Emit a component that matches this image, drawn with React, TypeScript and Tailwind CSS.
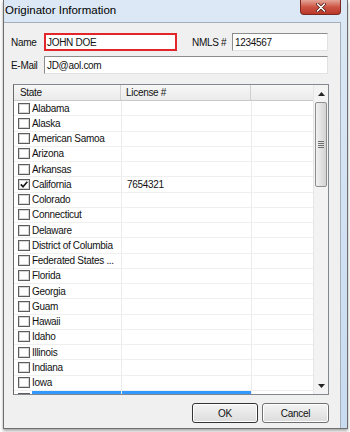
import React from 'react'

type StateRow = { name: string; license?: string; checked?: boolean }

const rows: StateRow[] = [
  { name: 'Alabama' },
  { name: 'Alaska' },
  { name: 'American Samoa' },
  { name: 'Arizona' },
  { name: 'Arkansas' },
  { name: 'California', license: '7654321', checked: true },
  { name: 'Colorado' },
  { name: 'Connecticut' },
  { name: 'Delaware' },
  { name: 'District of Columbia' },
  { name: 'Federated States ...' },
  { name: 'Florida' },
  { name: 'Georgia' },
  { name: 'Guam' },
  { name: 'Hawaii' },
  { name: 'Idaho' },
  { name: 'Illinois' },
  { name: 'Indiana' },
  { name: 'Iowa' },
]

const field =
  'flex h-[18px] items-center bg-white border border-[#e2e2e2] border-t-[#8c8c8c] border-l-[#8c8c8c] px-[2px] text-[#111]'

function CheckBox({ checked }: { checked?: boolean }) {
  return (
    <span className="flex h-[11px] w-[12px] shrink-0 items-center justify-center border border-[#5c5c5c] bg-white shadow-[inset_0_0_0_1px_#d6d6d6]">
      {checked && (
        <svg width="8" height="7" viewBox="0 0 8 7">
          <path d="M0.8 3.4 L3 5.7 L7.3 0.8" fill="none" stroke="#1a1a1a" strokeWidth="1.7" />
        </svg>
      )}
    </span>
  )
}

function Row({ row }: { row: StateRow }) {
  return (
    <div className="flex h-[15.25px] shrink-0 border-b border-[#efefef]">
      <div className="flex w-[108px] items-center border-r border-[#ececec] pl-[4px]">
        <CheckBox checked={row.checked} />
        <span className="ml-[2px] whitespace-nowrap">{row.name}</span>
      </div>
      <div className="flex w-[130px] items-center border-r border-[#ececec] pl-[5px]">{row.license}</div>
      <div className="flex-1" />
    </div>
  )
}

function ScrollBar() {
  return (
    <div className="flex w-[15px] flex-col bg-[#f3f3f3] border-l border-[#e6e6e6]">
      <div className="flex h-[17px] items-center justify-center">
        <svg width="7" height="4" viewBox="0 0 7 4">
          <path d="M0 4 L3.5 0 L7 4 Z" fill="#222" />
        </svg>
      </div>
      <div className="mx-auto flex h-[85px] w-[12px] items-center justify-center rounded-[2px] border border-[#8f8f8f] bg-gradient-to-r from-[#f1f1f1] to-[#d3d3d3]">
        <div className="flex flex-col gap-[1px]">
          <div className="h-[1px] w-[6px] bg-[#6f6f6f]" />
          <div className="h-[1px] w-[6px] bg-[#6f6f6f]" />
          <div className="h-[1px] w-[6px] bg-[#6f6f6f]" />
          <div className="h-[1px] w-[6px] bg-[#6f6f6f]" />
        </div>
      </div>
      <div className="flex-1" />
      <div className="flex h-[17px] items-center justify-center">
        <svg width="7" height="4" viewBox="0 0 7 4">
          <path d="M0 0 L7 0 L3.5 4 Z" fill="#222" />
        </svg>
      </div>
    </div>
  )
}

export default function App() {
  return (
    <div className="h-[432px] w-[350px] overflow-hidden bg-white font-['Liberation_Sans',sans-serif] text-[10px] tracking-[-0.3px] text-[#111]">
      <div className="ml-[3px] flex h-[429px] w-[345px] flex-col border-x border-b border-[#6e6e6e] bg-gradient-to-b from-[#dce8f5] to-[#c8dbf0] shadow-[0_2px_3px_rgba(0,0,0,0.35)]">
        {/* title bar */}
        <div className="flex h-[22px] shrink-0 items-start justify-between">
          <span className="pl-[1px] pt-[4px] text-[11.5px] leading-[13px] tracking-normal text-black">
            Originator Information
          </span>
          <div className="mr-[6px] flex h-[15px] w-[41px] items-center justify-center rounded-b-[4px] border border-t-0 border-[#7a2a20] bg-gradient-to-b from-[#e3a598] via-[#cc5444] to-[#b9382a]">
            <svg width="10" height="9" viewBox="0 0 10 9">
              <path d="M1.5 1 L8.5 8 M8.5 1 L1.5 8" stroke="#4a1a14" strokeWidth="3" strokeLinecap="round" />
              <path d="M1.5 1 L8.5 8 M8.5 1 L1.5 8" stroke="#ffffff" strokeWidth="1.6" strokeLinecap="round" />
            </svg>
          </div>
        </div>

        {/* dialog body */}
        <div className="mr-[6px] flex flex-1 flex-col border-t border-r border-[#a4afbb] bg-[#f0f0f0] pl-[7px] pt-[10px]">
          <div className="flex h-[18px] items-center">
            <span className="w-[33px]">Name</span>
            <div className={field + ' w-[133px] !border-2 !border-[#e3262a] pl-[1px]'}>JOHN DOE</div>
            <span className="ml-[15px] w-[40px]">NMLS #</span>
            <div className={field + ' w-[96px]'}>1234567</div>
          </div>
          <div className="mt-[5px] flex h-[18px] items-center">
            <span className="w-[33px]">E-Mail</span>
            <div className={field + ' w-[284px]'}>JD@aol.com</div>
          </div>

          {/* grid */}
          <div className="ml-[2px] mt-[10px] flex h-[311px] w-[316px] border border-[#828790] border-l-[#6a6a6a] bg-white">
            <div className="flex w-[299px] flex-col">
              <div className="flex h-[16px] shrink-0 border-b border-[#c9c9c9] bg-gradient-to-b from-[#f7f7f7] to-[#ebebeb]">
                <div className="flex w-[107px] items-center border-r border-[#cfcfcf] pl-[6px]">State</div>
                <div className="flex w-[130px] items-center border-r border-[#cfcfcf] pl-[5px]">License #</div>
                <div className="flex-1" />
              </div>
              <div className="flex flex-1 flex-col overflow-hidden">
                {rows.map((r) => (
                  <Row key={r.name} row={r} />
                ))}
                <div className="flex h-[15.25px] shrink-0">
                  <div className="flex w-[108px] items-center border-r border-[#ececec] pl-[4px]">
                    <CheckBox />
                    <span className="ml-[2px] flex-1 self-stretch bg-[#3399ff]" />
                  </div>
                  <div className="w-[130px] border-r border-[#ececec] bg-[#3399ff]" />
                  <div className="flex-1" />
                </div>
              </div>
            </div>
            <ScrollBar />
          </div>

          {/* buttons */}
          <div className="mt-[8px] flex gap-[4px] pl-[181px]">
            <button className="flex h-[20px] w-[66px] items-center justify-center rounded-[3px] border border-[#333] bg-gradient-to-b from-[#f4f4f4] to-[#dcdcdc] shadow-[inset_0_0_0_1px_#ffffff] text-[#111]">
              OK
            </button>
            <button className="flex h-[20px] w-[67px] items-center justify-center rounded-[3px] border border-[#707070] bg-gradient-to-b from-[#f4f4f4] to-[#dcdcdc] shadow-[inset_0_0_0_1px_#ffffff] text-[#111]">
              Cancel
            </button>
          </div>
        </div>
      </div>
    </div>
  )
}
